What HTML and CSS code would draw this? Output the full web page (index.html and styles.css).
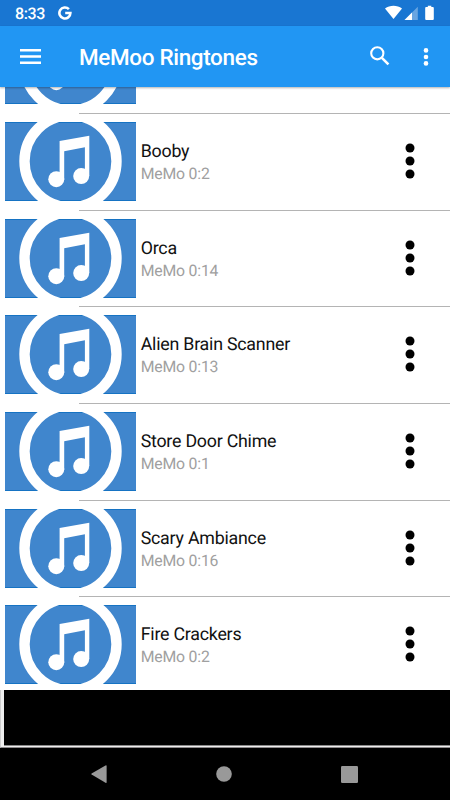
FILE: index.html
```html
<!DOCTYPE html>
<html lang="en">
<head>
    <meta charset="UTF-8">
    <meta name="viewport" content="width=device-width, initial-scale=1.0">
    <title>MeMoo Ringtones</title>
    <link rel="stylesheet" href="styles.css">
</head>
<body>

    <!-- Shared icons -->
    <svg class="sprite">
        <symbol id="art" viewBox="0 0 131 79">
            <rect width="131" height="79" fill="#4086cd"/>
            <path d="M0 .5H131M0 78.5H131" stroke="#1673c3"/>
            <circle cx="65.5" cy="39.3" r="46" fill="none" stroke="#fff" stroke-width="10.4"/>
            <path d="M54.6 18.9L84.3 13.7V54H79.9V25.3L59.2 29.3V57H54.6Z" fill="#fff"/>
            <circle cx="51.3" cy="57.2" r="8" fill="#fff"/>
            <circle cx="76.2" cy="54.1" r="8" fill="#fff"/>
        </symbol>
        <symbol id="dots" viewBox="0 0 10 36">
            <circle cx="5" cy="5" r="4.5"/>
            <circle cx="5" cy="18" r="4.5"/>
            <circle cx="5" cy="31" r="4.5"/>
        </symbol>
    </svg>

    <!-- Status bar -->
    <div class="status-bar">
        <span class="clock">8:33</span>
        <svg class="google" width="14" height="14" viewBox="0 0 14 14" fill="none" stroke="#fff" stroke-width="2.6">
            <path d="M10.9 3.2A5.5 5.5 0 1 0 12.4 7H7.2"></path>
        </svg>
        <svg class="signals" width="50" height="16" viewBox="0 0 50 16" fill="#fff">
            <path d="M0 3.6C4.8 -.1 12.2 -.1 17 3.6L8.5 14Z"></path>
            <path d="M32.8 1.7V15H19.5Z" opacity=".35"></path>
            <path d="M27 7.5V15H19.5Z"></path>
            <path d="M42.8 .8h3.5v1.3h1.6q.9 0 .9 .9v11q0 1-1 1h-6.6q-1 0-1-1V3q0-.9 .9-.9h1.7Z"></path>
        </svg>
    </div>

    <!-- Toolbar -->
    <header class="toolbar">
        <svg class="menu" width="21" height="15" viewBox="0 0 21 15" fill="#fff">
            <path d="M0 0H21V2.4H0ZM0 6.3H21V8.7H0ZM0 12.5H21V14.9H0Z"></path>
        </svg>
        <h1 class="title">MeMoo Ringtones</h1>
        <svg class="search" width="20" height="20" viewBox="0 0 20 20" fill="none" stroke="#fff" stroke-width="2.1">
            <circle cx="7.3" cy="7.3" r="6.1"></circle>
            <path d="M11.9 11.9L18.4 18.4" stroke-width="2.6"></path>
        </svg>
        <svg class="more" width="6" height="20" viewBox="0 0 6 20" fill="#fff">
            <circle cx="3" cy="3.4" r="2.3"></circle>
            <circle cx="3" cy="10" r="2.3"></circle>
            <circle cx="3" cy="16.4" r="2.3"></circle>
        </svg>
    </header>

    <!-- Ringtones, scrolled down a little -->
    <main class="list">
        <ul class="rows">
            <li class="row">
                <svg class="art"><use href="#art"/></svg>
            </li>
            <li class="row">
                <svg class="art"><use href="#art"/></svg>
                <div class="info">
                    <h2 class="name">Booby</h2>
                    <p class="meta">MeMo 0:2</p>
                </div>
                <svg class="dots"><use href="#dots"/></svg>
            </li>
            <li class="row">
                <svg class="art"><use href="#art"/></svg>
                <div class="info">
                    <h2 class="name">Orca</h2>
                    <p class="meta">MeMo 0:14</p>
                </div>
                <svg class="dots"><use href="#dots"/></svg>
            </li>
            <li class="row">
                <svg class="art"><use href="#art"/></svg>
                <div class="info">
                    <h2 class="name">Alien Brain Scanner</h2>
                    <p class="meta">MeMo 0:13</p>
                </div>
                <svg class="dots"><use href="#dots"/></svg>
            </li>
            <li class="row">
                <svg class="art"><use href="#art"/></svg>
                <div class="info">
                    <h2 class="name">Store Door Chime</h2>
                    <p class="meta">MeMo 0:1</p>
                </div>
                <svg class="dots"><use href="#dots"/></svg>
            </li>
            <li class="row">
                <svg class="art"><use href="#art"/></svg>
                <div class="info">
                    <h2 class="name">Scary Ambiance</h2>
                    <p class="meta">MeMo 0:16</p>
                </div>
                <svg class="dots"><use href="#dots"/></svg>
            </li>
            <li class="row">
                <svg class="art"><use href="#art"/></svg>
                <div class="info">
                    <h2 class="name">Fire Crackers</h2>
                    <p class="meta">MeMo 0:2</p>
                </div>
                <svg class="dots"><use href="#dots"/></svg>
            </li>
        </ul>
    </main>

    <!-- Ad banner -->
    <div class="banner">
        <div class="banner-content"></div>
    </div>

    <!-- System navigation -->
    <nav class="nav-bar">
        <svg width="16" height="18" viewBox="0 0 16 18" fill="#999"><path d="M.6 8.4Q0 9 .6 9.6L14.5 17.8Q15.6 18.3 15.6 17.3V.9Q15.6-.2 14.5 .4Z"></path></svg>
        <svg width="16" height="16" viewBox="0 0 16 16" fill="#999"><circle cx="8" cy="8" r="7.8"></circle></svg>
        <svg width="17" height="17" viewBox="0 0 17 17" fill="#999"><rect width="17" height="17" rx="1.2"></rect></svg>
    </nav>

</body>
</html>
```
FILE: styles.css
```css
* {
    margin: 0;
    padding: 0;
    box-sizing: border-box;
}

body {
    width: 450px;
    height: 800px;
    display: flex;
    flex-direction: column;
    overflow: hidden;
    background: #fff;
    font-family: Roboto, sans-serif;
    text-rendering: geometricPrecision;
}

svg {
    display: block;
    flex-shrink: 0;
}

.sprite {
    position: absolute;
    width: 0;
    height: 0;
}

/* Status bar */
.status-bar {
    height: 26px;
    flex-shrink: 0;
    display: flex;
    align-items: center;
    padding: 0 15px;
    background: #1976d2;
    color: #fff;
}

.clock {
    width: 43px;
    font-size: 16px;
    font-weight: 500;
    letter-spacing: -0.4px;
    line-height: 26px;
    padding-top: 2px;
}

.signals {
    margin-left: auto;
    margin-right: -0.5px;
    transform: translate(-1px, 0);
}

/* Toolbar */
.toolbar {
    position: relative;
    z-index: 1;
    height: 61px;
    flex-shrink: 0;
    display: flex;
    align-items: center;
    padding: 0 21px 0 20px;
    background: #2196f3;
    box-shadow: 0 1px 2px rgba(0, 0, 0, 0.3);
}

.menu {
    margin-right: 38px;
}

.title {
    flex: 1;
    color: #fff;
    font-size: 22.5px;
    font-weight: 500;
    letter-spacing: -0.35px;
    line-height: 30px;
    padding-top: 3px;
    white-space: nowrap;
}

.search {
    margin-right: 33px;
    margin-bottom: 1px;
}

/* List */
.list {
    height: 603px;
    flex-shrink: 0;
    overflow: hidden;
}

.rows {
    margin-top: -69.7px;
    list-style: none;
}

.row {
    height: 96.67px;
    display: flex;
    padding: 8px 35px 0 4.7px;
    background: linear-gradient(#b4b4b4, #b4b4b4) 79px bottom / 371px 1px no-repeat;
}

.art {
    width: 131px;
    height: 79px;
}

.info {
    flex: 1;
    padding: 19px 0 0 5px;
}

.name {
    color: #111;
    font-size: 17.8px;
    font-weight: 400;
    letter-spacing: -0.22px;
    line-height: 22px;
}

.meta {
    color: #a0a0a0;
    font-size: 15.8px;
    font-weight: 400;
    letter-spacing: -0.2px;
    line-height: 22px;
}

.dots {
    width: 10px;
    height: 36px;
    margin-top: 21px;
}

/* Banner */
.banner {
    height: 58px;
    flex-shrink: 0;
    padding: 0 0 1px 3px;
    background: #eee;
    border-left: 1px solid #ccc;
    border-bottom: 1px solid #8d8a8c;
}

.banner-content {
    height: 56px;
    background: #000;
    border-bottom: 1px solid #888;
}

/* System navigation */
.nav-bar {
    flex: 1;
    display: flex;
    align-items: center;
    justify-content: space-between;
    padding: 0 92.5px 0 91px;
    background: #000;
}
```
